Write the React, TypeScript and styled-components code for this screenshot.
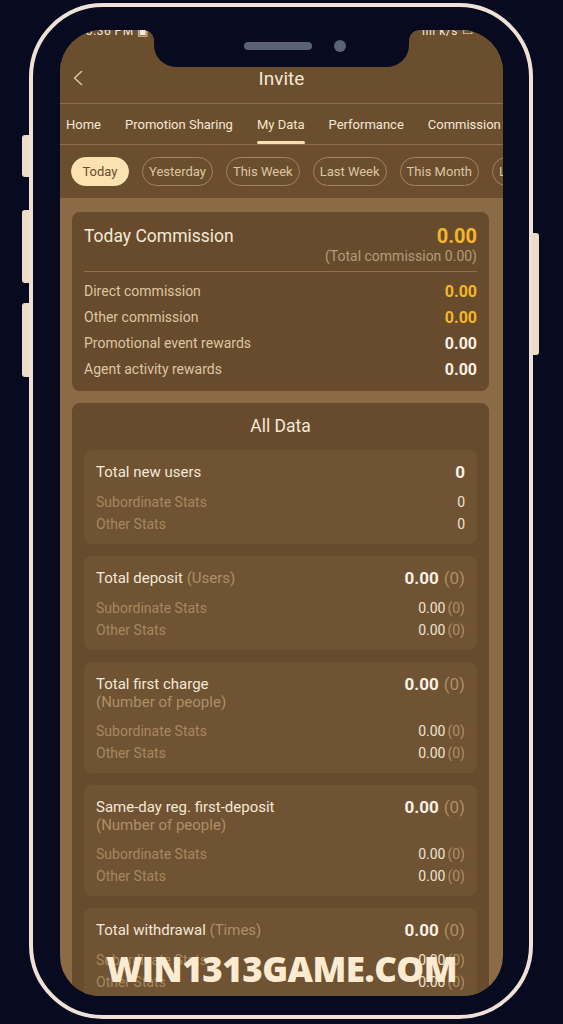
import React from "react";
import styled, { createGlobalStyle } from "styled-components";

const C = {
  night: "#080a20",
  frame: "#efe1d6",
  key: "#eddcc6",
  header: "#6b4e2e",
  body: "#8b6b45",
  card: "#684b2c",
  sub: "#6f5333",
  line: "#8e704b",
  cream: "#f4e8d6",
  label: "#dcc6a3",
  muted: "#a6885f",
  note: "#b39b79",
  gold: "#f2b72a",
  pill: "#fbe2b0",
};

const GlobalStyle = createGlobalStyle`
  html, body { margin: 0; padding: 0; background: ${C.night}; }
  body { font-family: Roboto, "Noto Sans", sans-serif; overflow: hidden; }
  * { box-sizing: border-box; }
`;

const Stage = styled.div`
  position: relative;
  width: 563px;
  height: 1024px;
  background: ${C.night};
  padding: 3px 0 0 29px;
  overflow: hidden;
`;

const Phone = styled.div`
  position: relative;
  width: 504px;
  height: 1016px;
  border: 4px solid ${C.frame};
  border-radius: 74px;
  padding: 23px 0 0 27px;
  background: ${C.night};
`;

const SideKey = styled.span<{ $side: "left" | "right"; $top: number; $h: number }>`
  position: absolute;
  top: ${(p) => p.$top}px;
  ${(p) =>
    p.$side === "left"
      ? "left: -11px; border-radius: 3px 0 0 3px;"
      : "right: -10px; border-radius: 0 3px 3px 0;"}
  width: 7px;
  height: ${(p) => p.$h}px;
  background: ${C.key};
`;

const Screen = styled.div`
  position: relative;
  width: 443px;
  height: 966px;
  border-radius: 42px 42px 40px 40px;
  overflow: hidden;
  background: ${C.body};
  display: flex;
  flex-direction: column;
`;

const Notch = styled.div`
  position: absolute;
  top: 0;
  left: 94px;
  width: 255px;
  height: 37px;
  background: ${C.night};
  border-radius: 0 0 22px 22px;
  &::before,
  &::after {
    content: "";
    position: absolute;
    top: 0;
    width: 10px;
    height: 10px;
  }
  &::before {
    left: -10px;
    background: radial-gradient(circle at 0 100%, transparent 9.5px, ${C.night} 10px);
  }
  &::after {
    right: -10px;
    background: radial-gradient(circle at 100% 100%, transparent 9.5px, ${C.night} 10px);
  }
`;

const Speaker = styled.span`
  position: absolute;
  left: 90px;
  top: 12px;
  width: 68px;
  height: 8px;
  border-radius: 4px;
  background: #5a6277;
`;

const Camera = styled.span`
  position: absolute;
  left: 180px;
  top: 10px;
  width: 12px;
  height: 12px;
  border-radius: 50%;
  background: #5a6277;
`;

const TopPanel = styled.header`
  flex: none;
  background: ${C.header};
`;

const StatusBar = styled.div`
  height: 23px;
  display: flex;
  justify-content: space-between;
  align-items: flex-start;
  padding: 0 30px 0 26px;
  font-size: 12px;
  line-height: 12px;
  color: ${C.cream};
`;

const StatusText = styled.span`
  margin-top: -5px;
  letter-spacing: 0.5px;
`;

const TitleBar = styled.div`
  display: grid;
  grid-template-columns: 36px 1fr 36px;
  align-items: center;
  height: 51px;
  border-bottom: 1px solid ${C.line};
`;

const BackButton = styled.span`
  display: flex;
  margin-left: 13px;
`;

const PageTitle = styled.h1`
  margin: 0;
  text-align: center;
  font-size: 19px;
  font-weight: 400;
  color: ${C.cream};
`;

const TabRow = styled.nav`
  display: flex;
  gap: 24px;
  padding-left: 6px;
  height: 41px;
  border-bottom: 1px solid ${C.line};
  white-space: nowrap;
  overflow: hidden;
`;

const Tab = styled.span<{ $active?: boolean }>`
  position: relative;
  flex: none;
  display: flex;
  align-items: center;
  height: 100%;
  font-size: 13px;
  color: ${(p) => (p.$active ? "#f6e6c8" : C.cream)};
  &::after {
    content: "";
    display: ${(p) => (p.$active ? "block" : "none")};
    position: absolute;
    left: 0;
    right: 0;
    bottom: 0;
    height: 3px;
    border-radius: 2px;
    background: #f6dfb7;
  }
`;

const FilterRow = styled.div`
  display: flex;
  align-items: center;
  gap: 13px;
  padding-left: 11px;
  height: 53px;
  overflow: hidden;
`;

const Pill = styled.span<{ $active?: boolean }>`
  flex: none;
  height: 29px;
  min-width: 58px;
  padding: 0 6px;
  border-radius: 15px;
  display: inline-flex;
  align-items: center;
  justify-content: center;
  font-size: 13px;
  border: 1px solid ${(p) => (p.$active ? C.pill : "#a4845a")};
  background: ${(p) => (p.$active ? C.pill : "transparent")};
  color: ${(p) => (p.$active ? "#6a4c2c" : "#dcc6a1")};
`;

const Content = styled.main`
  display: flex;
  flex-direction: column;
  gap: 12px;
  padding: 14px 14px 0 12px;
`;

const Card = styled.section`
  background: ${C.card};
  border-radius: 8px;
  padding: 13px 12px 9px;
`;

const SummaryHead = styled.div`
  display: flex;
  justify-content: space-between;
  align-items: flex-start;
  padding-bottom: 6px;
  border-bottom: 1px solid ${C.line};
`;

const CardTitle = styled.h2<{ $center?: boolean }>`
  margin: 0;
  font-size: 17.5px;
  line-height: ${(p) => (p.$center ? "24px" : "22px")};
  font-weight: 400;
  color: ${C.cream};
  text-align: ${(p) => (p.$center ? "center" : "left")};
`;

const HeadAmount = styled.div`
  text-align: right;
`;

const BigGold = styled.div`
  font-size: 20px;
  line-height: 22px;
  font-weight: 700;
  color: ${C.gold};
`;

const TotalNote = styled.div`
  font-size: 14px;
  line-height: 18px;
  color: ${C.note};
`;

const RowList = styled.div`
  padding-top: 6px;
`;

const MetricRow = styled.div`
  display: flex;
  justify-content: space-between;
  align-items: center;
  height: 26px;
  font-size: 14px;
  color: ${C.label};
`;

const MetricValue = styled.span<{ $gold?: boolean }>`
  font-size: 16px;
  font-weight: 700;
  color: ${(p) => (p.$gold ? C.gold : "#f7efe4")};
`;

const DataCard = styled.section`
  background: ${C.card};
  border-radius: 8px;
  padding: 11px 12px 12px;
  display: flex;
  flex-direction: column;
  gap: 12px;
`;

const StatBlock = styled.div`
  background: ${C.sub};
  border-radius: 8px;
  padding: 13px 12px 9px;
`;

const BlockHead = styled.div`
  display: flex;
  justify-content: space-between;
  align-items: flex-start;
  margin-bottom: 9px;
`;

const BlockTitle = styled.div`
  font-size: 15px;
  line-height: 19px;
  color: ${C.cream};
`;

const Hint = styled.span<{ $block?: boolean }>`
  display: ${(p) => (p.$block ? "block" : "inline")};
  line-height: ${(p) => (p.$block ? "17px" : "inherit")};
  color: #ad8f66;
`;

const BlockTotal = styled.div`
  font-size: 17px;
  line-height: 19px;
  font-weight: 700;
  color: #f7efe4;
  white-space: nowrap;
`;

const Count = styled.span<{ $tight?: boolean }>`
  font-weight: 400;
  color: #ad8f66;
  margin-left: ${(p) => (p.$tight ? "2px" : "5px")};
`;

const StatLine = styled.div`
  display: flex;
  justify-content: space-between;
  align-items: center;
  height: 22px;
  font-size: 14px;
  color: ${C.muted};
`;

const StatValue = styled.span`
  color: #efe3d0;
`;

const Watermark = styled.div`
  position: absolute;
  left: 0;
  right: 0;
  top: 945px;
  text-align: center;
  font-family: "Open Sans", "Noto Sans", sans-serif;
  font-weight: 800;
  font-size: 35px;
  letter-spacing: -0.5px;
  color: #fdebd1;
  pointer-events: none;
`;

type Block = {
  title: string;
  hint?: string;
  hintOwnLine?: boolean;
  total: string;
  count?: string;
};

const blocks: Block[] = [
  { title: "Total new users", total: "0" },
  { title: "Total deposit", hint: "(Users)", total: "0.00", count: "(0)" },
  { title: "Total first charge", hint: "(Number of people)", hintOwnLine: true, total: "0.00", count: "(0)" },
  { title: "Same-day reg. first-deposit", hint: "(Number of people)", hintOwnLine: true, total: "0.00", count: "(0)" },
  { title: "Total withdrawal", hint: "(Times)", total: "0.00", count: "(0)" },
];

const tabs = ["Home", "Promotion Sharing", "My Data", "Performance", "Commission"];
const ranges = ["Today", "Yesterday", "This Week", "Last Week", "This Month", "Last Month"];

const metrics = [
  { label: "Direct commission", value: "0.00", gold: true },
  { label: "Other commission", value: "0.00", gold: true },
  { label: "Promotional event rewards", value: "0.00", gold: false },
  { label: "Agent activity rewards", value: "0.00", gold: false },
];

function StatValueCell({ block }: { block: Block }) {
  if (!block.count) return <StatValue>{block.total}</StatValue>;
  return (
    <StatValue>
      {block.total}
      <Count $tight>{block.count}</Count>
    </StatValue>
  );
}

export default function App() {
  return (
    <>
      <GlobalStyle />
      <Stage>
        <Phone>
          <SideKey $side="left" $top={128} $h={42} />
          <SideKey $side="left" $top={203} $h={73} />
          <SideKey $side="left" $top={296} $h={74} />
          <SideKey $side="right" $top={226} $h={122} />
          <Screen>
            <TopPanel>
              <StatusBar>
                <StatusText>3:36 PM ▣</StatusText>
                <StatusText>ıııı k/s ▭</StatusText>
              </StatusBar>
              <TitleBar>
                <BackButton>
                  <svg width="10" height="16" viewBox="0 0 10 16">
                    <polyline points="8.5,1.5 1.5,8 8.5,14.5" fill="none" stroke="#d8c29e" strokeWidth="1.6" strokeLinecap="round" strokeLinejoin="round" />
                  </svg>
                </BackButton>
                <PageTitle>Invite</PageTitle>
                <span />
              </TitleBar>
              <TabRow>
                {tabs.map((t) => (
                  <Tab key={t} $active={t === "My Data"}>
                    {t}
                  </Tab>
                ))}
              </TabRow>
              <FilterRow>
                {ranges.map((r) => (
                  <Pill key={r} $active={r === "Today"}>
                    {r}
                  </Pill>
                ))}
              </FilterRow>
            </TopPanel>
            <Content>
              <Card>
                <SummaryHead>
                  <CardTitle>Today Commission</CardTitle>
                  <HeadAmount>
                    <BigGold>0.00</BigGold>
                    <TotalNote>(Total commission 0.00)</TotalNote>
                  </HeadAmount>
                </SummaryHead>
                <RowList>
                  {metrics.map((m) => (
                    <MetricRow key={m.label}>
                      <span>{m.label}</span>
                      <MetricValue $gold={m.gold}>{m.value}</MetricValue>
                    </MetricRow>
                  ))}
                </RowList>
              </Card>
              <DataCard>
                <CardTitle $center>All Data</CardTitle>
                {blocks.map((b) => (
                  <StatBlock key={b.title}>
                    <BlockHead>
                      <BlockTitle>
                        {b.title}
                        {b.hint && !b.hintOwnLine && <Hint> {b.hint}</Hint>}
                        {b.hint && b.hintOwnLine && <Hint $block>{b.hint}</Hint>}
                      </BlockTitle>
                      <BlockTotal>
                        {b.total}
                        {b.count && <Count>{b.count}</Count>}
                      </BlockTotal>
                    </BlockHead>
                    <StatLine>
                      <span>Subordinate Stats</span>
                      <StatValueCell block={b} />
                    </StatLine>
                    <StatLine>
                      <span>Other Stats</span>
                      <StatValueCell block={b} />
                    </StatLine>
                  </StatBlock>
                ))}
              </DataCard>
            </Content>
            <Notch>
              <Speaker />
              <Camera />
            </Notch>
          </Screen>
        </Phone>
        <Watermark>WIN1313GAME.COM</Watermark>
      </Stage>
    </>
  );
}
